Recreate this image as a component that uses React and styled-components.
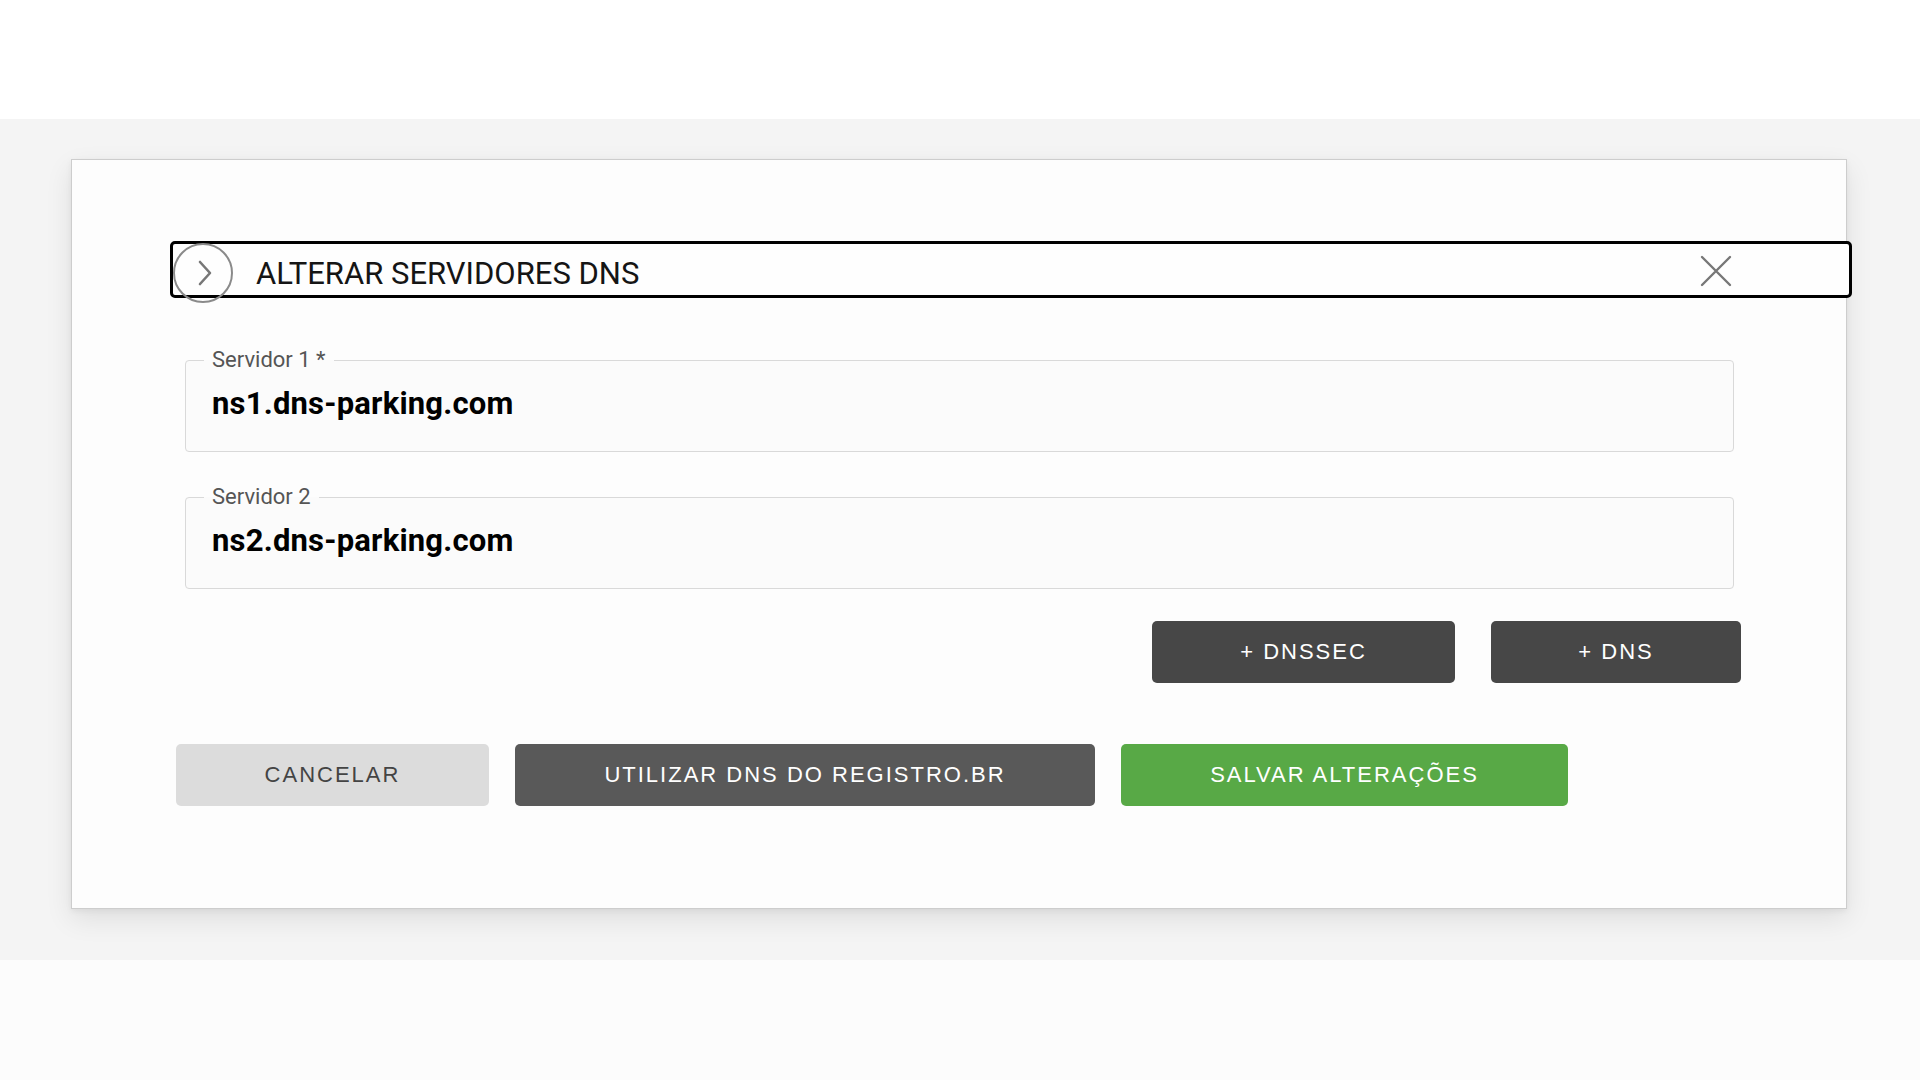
import styled, { createGlobalStyle } from "styled-components";

const GlobalStyle = createGlobalStyle`
  html, body {
    margin: 0;
    padding: 0;
    background: #fcfcfc;
  }
  * {
    box-sizing: border-box;
  }
`;

const Page = styled.div`
  min-height: 1080px;
  background: #fcfcfc;
`;

const TopBand = styled.div`
  height: 119px;
  background: #ffffff;
`;

const Backdrop = styled.div`
  height: 841px;
  padding: 40px 0 0 71px;
  background: #f4f4f4;
`;

const Modal = styled.div`
  width: 1776px;
  height: 750px;
  padding: 81px 0 0 98px;
  background: #fdfdfd;
  border: 1px solid #cdcdcd;
  box-shadow: 0 10px 26px rgba(0, 0, 0, 0.09), 0 2px 6px rgba(0, 0, 0, 0.06);
`;

const TitleBar = styled.div`
  display: flex;
  align-items: flex-start;
  width: 1682px;
  height: 57px;
  border: 3px solid #000;
  border-radius: 5px;
  background: #fefefe;
`;

const ToggleCircle = styled.button`
  flex: none;
  display: flex;
  align-items: center;
  justify-content: center;
  width: 60px;
  height: 60px;
  margin: -1px 0 0 0;
  padding: 0 0 0 4px;
  border: 2px solid #8a8a8a;
  border-radius: 50%;
  background: transparent;
  cursor: pointer;
`;

const Title = styled.h2`
  flex: 1;
  margin: 0;
  padding: 12px 0 0 23px;
  font-family: Roboto, "Liberation Sans", sans-serif;
  font-size: 31px;
  font-weight: 400;
  line-height: 36px;
  color: #151515;
`;

const CloseButton = styled.button`
  flex: none;
  display: flex;
  width: 32px;
  height: 32px;
  margin: 11px 117px 0 0;
  padding: 0;
  border: none;
  background: transparent;
  cursor: pointer;
`;

const Form = styled.div`
  width: 1556px;
  margin: 49px 0 0 15px;
`;

const Field = styled.fieldset`
  width: 1549px;
  margin: 0 0 32px;
  padding: 0 18px 29px;
  border: 1px solid #d9d9d9;
  border-radius: 4px;
  background: #fbfbfb;
  font-family: Roboto, "Liberation Sans", sans-serif;
`;

const Legend = styled.legend`
  padding: 0 8px;
  font-size: 22px;
  line-height: 26px;
  color: #555;
`;

const Value = styled.div`
  margin-top: 13px;
  padding-left: 8px;
  font-size: 31px;
  font-weight: 700;
  line-height: 36px;
  letter-spacing: 0.2px;
  color: #000;
`;

const ExtraRow = styled.div`
  display: flex;
  justify-content: flex-end;
  gap: 36px;
  margin-top: 0;
`;

const Button = styled.button`
  width: ${(p) => p.$w}px;
  height: 62px;
  border: none;
  border-radius: 5px;
  background: ${(p) => p.$bg};
  color: ${(p) => p.$fg || "#fff"};
  font-family: "Liberation Sans", Arial, sans-serif;
  font-size: 22px;
  letter-spacing: 2px;
  text-transform: uppercase;
  cursor: pointer;
`;

const Footer = styled.div`
  display: flex;
  gap: 26px;
  margin: 61px 0 0 6px;
`;

function Chevron() {
  return (
    <svg width="16" height="26" viewBox="0 0 16 26" fill="none">
      <path
        d="M3 2 L13 13 L3 24"
        stroke="#777"
        strokeWidth="2.6"
        strokeLinecap="round"
        strokeLinejoin="round"
      />
    </svg>
  );
}

function CloseIcon() {
  return (
    <svg width="32" height="32" viewBox="0 0 32 32" fill="none">
      <path
        d="M2 2 L30 30 M30 2 L2 30"
        stroke="#777"
        strokeWidth="2.4"
        strokeLinecap="round"
      />
    </svg>
  );
}

export default function App() {
  const servers = [
    { label: "Servidor 1 *", value: "ns1.dns-parking.com" },
    { label: "Servidor 2", value: "ns2.dns-parking.com" },
  ];

  return (
    <Page>
      <GlobalStyle />
      <TopBand />
      <Backdrop>
        <Modal>
          <TitleBar>
            <ToggleCircle aria-label="Expandir">
              <Chevron />
            </ToggleCircle>
            <Title>ALTERAR SERVIDORES DNS</Title>
            <CloseButton aria-label="Fechar">
              <CloseIcon />
            </CloseButton>
          </TitleBar>

          <Form>
            {servers.map((s) => (
              <Field key={s.label}>
                <Legend>{s.label}</Legend>
                <Value>{s.value}</Value>
              </Field>
            ))}
            <ExtraRow>
              <Button $w={303} $bg="#474747">
                + DNSSEC
              </Button>
              <Button $w={250} $bg="#474747">
                + DNS
              </Button>
            </ExtraRow>
          </Form>

          <Footer>
            <Button $w={313} $bg="#dcdcdc" $fg="#444">
              Cancelar
            </Button>
            <Button $w={580} $bg="#595959">
              Utilizar DNS do Registro.br
            </Button>
            <Button $w={447} $bg="#58a946">
              Salvar alterações
            </Button>
          </Footer>
        </Modal>
      </Backdrop>
    </Page>
  );
}
